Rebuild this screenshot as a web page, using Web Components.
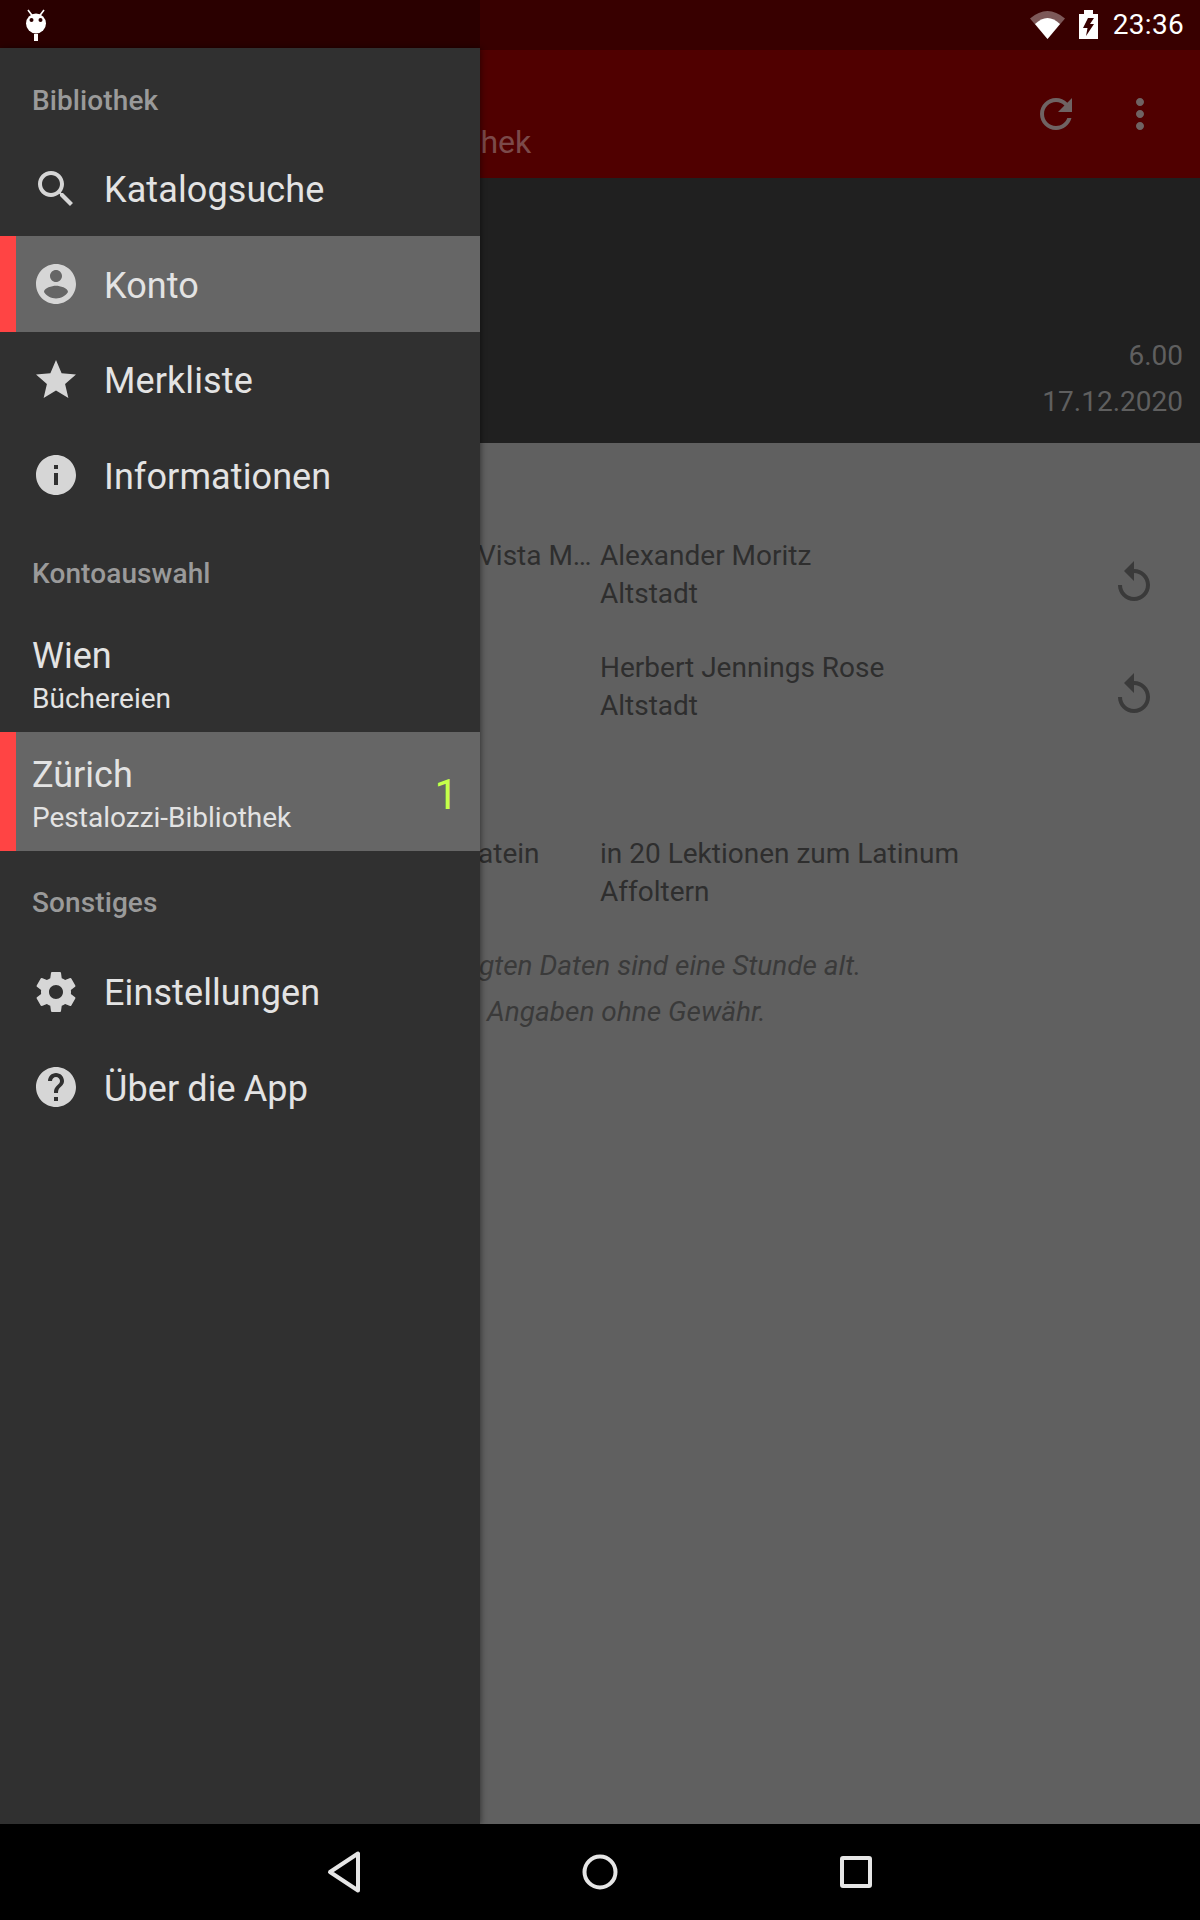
<!DOCTYPE html>
<html>

<head>
    <meta charset="utf-8">
    <title>Konto</title>
    <style>
        html, body {
            margin: 0;
            background: #000;
            font-family: Roboto, "Liberation Sans", sans-serif;
        }
    </style>
</head>

<body>
    <app-screen>
        <status-bar slot="top"></status-bar>

        <tool-bar slot="main" subtitle="thek"></tool-bar>

        <account-head slot="main">
            <div>6.00</div>
            <div>17.12.2020</div>
        </account-head>

        <account-body slot="main">
            <loan-row title-text="Vista M…" author="Alexander Moritz" branch="Altstadt" renew></loan-row>
            <loan-row author="Herbert Jennings Rose" branch="Altstadt" renew></loan-row>
            <loan-row class="next" title-text="atein" author="in 20 Lektionen zum Latinum" branch="Affoltern"></loan-row>
            <note-line class="first" style="--x: 1px">gten Daten sind eine Stunde alt.</note-line>
            <note-line style="--x: 9px">Angaben ohne Gewähr.</note-line>
        </account-body>

        <nav-bar slot="bottom"></nav-bar>

        <nav-drawer slot="drawer">
            <drawer-head style="--head-top: 37px">Bibliothek</drawer-head>
            <drawer-item icon="search">Katalogsuche</drawer-item>
            <drawer-item icon="account" selected>Konto</drawer-item>
            <drawer-item icon="star">Merkliste</drawer-item>
            <drawer-item icon="info">Informationen</drawer-item>

            <drawer-head style="--head-height: 90.25px; --head-top: 35px">Kontoauswahl</drawer-head>
            <drawer-account name="Wien" sub="Büchereien"></drawer-account>
            <drawer-account name="Zürich" sub="Pestalozzi-Bibliothek" count="1" selected></drawer-account>

            <drawer-head>Sonstiges</drawer-head>
            <drawer-item icon="settings">Einstellungen</drawer-item>
            <drawer-item icon="help">Über die App</drawer-item>
        </nav-drawer>
    </app-screen>

    <script>
        const ICONS = {
            search: 'M15.5 14h-.79l-.28-.27C15.41 12.59 16 11.11 16 9.5 16 5.91 13.09 3 9.5 3S3 5.91 3 9.5 5.91 16 9.5 16c1.61 0 3.09-.59 4.23-1.57l.27.28v.79l5 4.99L20.49 19l-4.99-5zm-6 0C7.01 14 5 11.99 5 9.5S7.01 5 9.5 5 14 7.01 14 9.5 11.99 14 9.5 14z',
            account: 'M12 2C6.48 2 2 6.48 2 12s4.48 10 10 10 10-4.48 10-10S17.52 2 12 2zm0 3c1.66 0 3 1.34 3 3s-1.34 3-3 3-3-1.34-3-3 1.34-3 3-3zm0 14.2c-2.5 0-4.71-1.28-6-3.22.03-1.99 4-3.08 6-3.08 1.99 0 5.97 1.09 6 3.08-1.29 1.94-3.5 3.22-6 3.22z',
            star: 'M12 17.27L18.18 21l-1.64-7.03L22 9.24l-7.19-.61L12 2 9.19 8.63 2 9.24l5.46 4.73L5.82 21z',
            info: 'M12 2C6.48 2 2 6.48 2 12s4.48 10 10 10 10-4.48 10-10S17.52 2 12 2zm1 15h-2v-6h2v6zm0-8h-2V7h2v2z',
            settings: 'M19.43 12.98c.04-.32.07-.64.07-.98s-.03-.66-.07-.98l2.11-1.65c.19-.15.24-.42.12-.64l-2-3.46c-.12-.22-.39-.3-.61-.22l-2.49 1c-.52-.4-1.08-.73-1.69-.98l-.38-2.65C14.46 2.18 14.25 2 14 2h-4c-.25 0-.46.18-.49.42l-.38 2.65c-.61.25-1.17.59-1.69.98l-2.49-1c-.23-.09-.49 0-.61.22l-2 3.46c-.13.22-.07.49.12.64l2.11 1.65c-.04.32-.07.65-.07.98s.03.66.07.98l-2.11 1.65c-.19.15-.24.42-.12.64l2 3.46c.12.22.39.3.61.22l2.49-1c.52.4 1.08.73 1.69.98l.38 2.65c.03.24.24.42.49.42h4c.25 0 .46-.18.49-.42l.38-2.65c.61-.25 1.17-.59 1.69-.98l2.49 1c.23.09.49 0 .61-.22l2-3.46c.12-.22.07-.49-.12-.64l-2.11-1.65zM12 15.5c-1.93 0-3.5-1.57-3.5-3.5s1.57-3.5 3.5-3.5 3.5 1.57 3.5 3.5-1.57 3.5-3.5 3.5z',
            help: 'M12 2C6.48 2 2 6.48 2 12s4.48 10 10 10 10-4.48 10-10S17.52 2 12 2zm1 17h-2v-2h2v2zm2.07-7.75l-.9.92C13.45 12.9 13 13.5 13 15h-2v-.5c0-1.1.45-2.1 1.17-2.83l1.24-1.26c.37-.36.59-.86.59-1.41 0-1.1-.9-2-2-2s-2 .9-2 2H8c0-2.21 1.79-4 4-4s4 1.79 4 4c0 .88-.36 1.68-.93 2.25z',
            refresh: 'M17.65 6.35C16.2 4.9 14.21 4 12 4c-4.42 0-7.99 3.58-7.99 8s3.57 8 7.99 8c3.73 0 6.84-2.55 7.73-6h-2.08c-.82 2.33-3.04 4-5.65 4-3.31 0-6-2.69-6-6s2.69-6 6-6c1.66 0 3.14.69 4.22 1.78L13 11h7V4l-2.35 2.35z',
            more: 'M12 8c1.1 0 2-.9 2-2s-.9-2-2-2-2 .9-2 2 .9 2 2 2zm0 2c-1.1 0-2 .9-2 2s.9 2 2 2 2-.9 2-2-.9-2-2-2zm0 6c-1.1 0-2 .9-2 2s.9 2 2 2 2-.9 2-2-.9-2-2-2z',
            replay: 'M12 5V1L7 6l5 5V7c3.31 0 6 2.69 6 6s-2.69 6-6 6-6-2.69-6-6H4c0 4.42 3.58 8 8 8s8-3.58 8-8-3.58-8-8-8z'
        };

        // small helper, every element below is just markup + style in an open root
        class Base extends HTMLElement {
            render(html) {
                if (!this.shadowRoot) this.attachShadow({ mode: 'open' });
                this.shadowRoot.innerHTML = html;
            }
        }

        customElements.define('app-icon', class extends Base {
            connectedCallback() {
                const d = ICONS[this.getAttribute('name')];
                this.render(`
                    <style>
                        :host { display: block; width: 48px; height: 48px; flex: none; }
                        svg { display: block; width: 48px; height: 48px; fill: currentColor; }
                    </style>
                    <svg viewBox="0 0 24 24"><path d="${d}"/></svg>`);
            }
        });

        customElements.define('app-screen', class extends Base {
            connectedCallback() {
                this.render(`
                    <style>
                        :host {
                            display: flex;
                            flex-direction: column;
                            position: relative;
                            width: 1200px;
                            height: 1920px;
                            overflow: hidden;
                            font-family: Roboto, "Liberation Sans", sans-serif;
                        }
                        main { flex: 1; display: flex; flex-direction: column; min-height: 0; }
                    </style>
                    <slot name="top"></slot>
                    <main><slot name="main"></slot></main>
                    <slot name="bottom"></slot>
                    <slot name="drawer"></slot>`);
            }
        });

        customElements.define('status-bar', class extends Base {
            connectedCallback() {
                this.render(`
                    <style>
                        :host {
                            display: flex;
                            flex: none;
                            height: 50px;
                            background: linear-gradient(to right, #2a0000 480px, #380000 480px);
                            color: #fff;
                        }
                        .robot { margin: 8px 0 0 24px; }
                        .right { margin-left: auto; display: flex; }
                        .wifi { margin: 11px 14px 0 0; }
                        .battery { margin: 10px 15px 0 0; }
                        .time { font-size: 28px; line-height: 50px; padding-right: 16px; letter-spacing: .3px; }
                        svg { display: block; fill: #fff; }
                    </style>
                    <svg class="robot" width="24" height="34" viewBox="24 8 24 34">
                        <path d="M28 10l4.5 6M44 10l-4.5 6" stroke="#fff" stroke-width="1.6"/>
                        <circle cx="36" cy="23.5" r="10"/>
                        <rect x="34" y="34" width="4" height="7"/>
                        <circle cx="31.5" cy="20" r="2" fill="#2a0000"/>
                        <circle cx="40.5" cy="20" r="2" fill="#2a0000"/>
                    </svg>
                    <div class="right">
                        <svg class="wifi" width="35" height="28" viewBox="0 0 35 28">
                            <path d="M0 7.5Q17.5-7.5 35 7.5L17.5 28z" opacity=".35"/>
                            <path d="M5 13Q17.5 1 30 13L17.5 28z"/>
                        </svg>
                        <svg class="battery" width="19" height="29" viewBox="0 0 19 29">
                            <path fill-rule="evenodd" d="M5 0h9v4h5v25H0V4h5zM9 8h6l-4 6h4l-8 12 1.500-8H4z"/>
                        </svg>
                        <div class="time">23:36</div>
                    </div>`);
            }
        });

        customElements.define('tool-bar', class extends Base {
            connectedCallback() {
                this.render(`
                    <style>
                        :host {
                            display: flex;
                            flex: none;
                            height: 128px;
                            background: #500000;
                            color: #6f6363;
                        }
                        .sub { font-size: 32px; line-height: 38px; margin: 73px 0 0 470px; color: #7b4a4a; }
                        .icons { margin-left: auto; display: flex; gap: 36px; padding: 40px 36px 0 0; }
                    </style>
                    <div class="sub">${this.getAttribute('subtitle')}</div>
                    <div class="icons">
                        <app-icon name="refresh"></app-icon>
                        <app-icon name="more"></app-icon>
                    </div>`);
            }
        });

        customElements.define('account-head', class extends Base {
            connectedCallback() {
                this.render(`
                    <style>
                        :host {
                            display: block;
                            flex: none;
                            height: 265px;
                            box-sizing: border-box;
                            padding: 155px 17px 0 0;
                            background: #202020;
                            color: #5f5f5f;
                            font-size: 28px;
                            line-height: 46px;
                            text-align: right;
                        }
                    </style>
                    <slot></slot>`);
            }
        });

        customElements.define('account-body', class extends Base {
            connectedCallback() {
                this.render(`
                    <style>
                        :host {
                            display: flex;
                            flex-direction: column;
                            flex: 1;
                            padding: 94px 42px 0 478px;
                            background: #606060;
                            color: #2e2e2e;
                            font-size: 28px;
                        }
                    </style>
                    <slot></slot>`);
            }
        });

        customElements.define('loan-row', class extends Base {
            connectedCallback() {
                const renew = this.hasAttribute('renew');
                this.render(`
                    <style>
                        :host {
                            display: grid;
                            grid-template-columns: 122px 1fr 48px;
                            height: 76px;
                            margin-bottom: 36px;
                            line-height: 38px;
                        }
                        :host(.next) { margin-top: 74px; margin-bottom: 0; }
                        app-icon { margin-top: 22px; color: #3a3a3a; }
                    </style>
                    <div>${this.getAttribute('title-text') || ''}</div>
                    <div>
                        <div>${this.getAttribute('author')}</div>
                        <div>${this.getAttribute('branch')}</div>
                    </div>
                    ${renew ? '<app-icon name="replay"></app-icon>' : ''}`);
            }
        });

        customElements.define('note-line', class extends Base {
            connectedCallback() {
                this.render(`
                    <style>
                        :host {
                            display: block;
                            padding-left: var(--x, 0);
                            font-style: italic;
                            line-height: 46px;
                            color: #3a3a3a;
                        }
                        :host(.first) { margin-top: 32px; }
                    </style>
                    <slot></slot>`);
            }
        });

        customElements.define('nav-bar', class extends Base {
            connectedCallback() {
                this.render(`
                    <style>
                        :host {
                            display: flex;
                            flex: none;
                            height: 96px;
                            background: #000;
                            justify-content: center;
                            align-items: center;
                        }
                        div { width: 256px; display: flex; justify-content: center; }
                        svg { display: block; fill: none; stroke: #e6e6e6; stroke-width: 4; stroke-linejoin: round; }
                    </style>
                    <div><svg width="48" height="48" viewBox="0 0 48 48"><path d="M10 24L38 5.500v37z"/></svg></div>
                    <div><svg width="48" height="48" viewBox="0 0 48 48"><circle cx="24" cy="24" r="15.500"/></svg></div>
                    <div><svg width="48" height="48" viewBox="0 0 48 48"><rect x="10" y="10" width="28" height="28" rx="1"/></svg></div>`);
            }
        });

        customElements.define('nav-drawer', class extends Base {
            connectedCallback() {
                this.render(`
                    <style>
                        :host {
                            display: block;
                            position: absolute;
                            left: 0;
                            top: 48px;
                            bottom: 96px;
                            width: 480px;
                            background: #303030;
                            box-shadow: 1px 0 6px rgba(0, 0, 0, .45);
                        }
                    </style>
                    <slot></slot>`);
            }
        });

        customElements.define('drawer-head', class extends Base {
            connectedCallback() {
                this.render(`
                    <style>
                        :host {
                            display: block;
                            box-sizing: border-box;
                            height: var(--head-height, 92.75px);
                            padding: var(--head-top, 36px) 0 0 32px;
                            font-size: 28px;
                            font-weight: 500;
                            line-height: 32px;
                            letter-spacing: .1px;
                            color: #9a9a9a;
                        }
                    </style>
                    <slot></slot>`);
            }
        });

        customElements.define('drawer-item', class extends Base {
            connectedCallback() {
                this.render(`
                    <style>
                        :host {
                            display: flex;
                            align-items: center;
                            height: 95.5px;
                            padding-left: 32px;
                            font-size: 36px;
                            letter-spacing: .1px;
                            word-spacing: -1px;
                            color: #e3e3e3;
                        }
                        :host([selected]) {
                            background: #666;
                            box-shadow: inset 16px 0 0 #f44;
                        }
                        app-icon { color: #d6d6d6; margin-right: 24px; }
                        span { margin-top: 3px; }
                    </style>
                    <app-icon name="${this.getAttribute('icon')}"></app-icon>
                    <span><slot></slot></span>`);
            }
        });

        customElements.define('drawer-account', class extends Base {
            connectedCallback() {
                const count = this.getAttribute('count');
                this.render(`
                    <style>
                        :host {
                            display: flex;
                            align-items: center;
                            box-sizing: border-box;
                            height: 119px;
                            padding: 0 22px 0 32px;
                            color: #e3e3e3;
                        }
                        :host([selected]) {
                            background: #666;
                            box-shadow: inset 16px 0 0 #f44;
                        }
                        .text { margin-top: 9px; }
                        .name { font-size: 36px; line-height: 43px; }
                        .sub { font-size: 28px; line-height: 41px; }
                        .count { margin: 6px 0 0 auto; font-size: 42px; color: #c6ff4a; }
                    </style>
                    <div class="text">
                        <div class="name">${this.getAttribute('name')}</div>
                        <div class="sub">${this.getAttribute('sub')}</div>
                    </div>
                    ${count ? `<div class="count">${count}</div>` : ''}`);
            }
        });
    </script>
</body>

</html>
